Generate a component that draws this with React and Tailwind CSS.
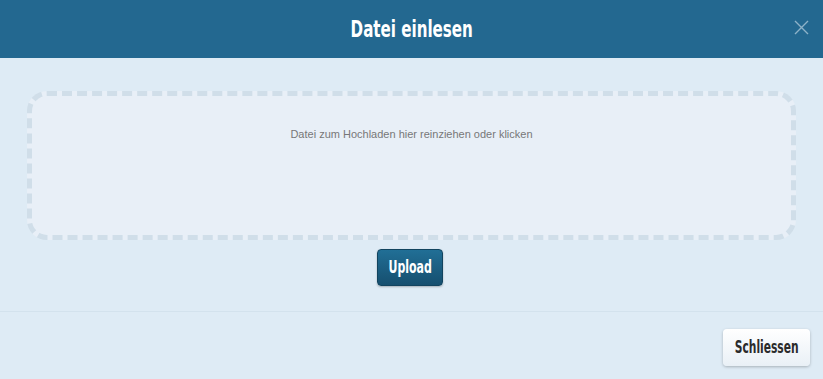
import React from 'react';

const condensed = { fontFamily: '"DejaVu Sans Condensed", "Liberation Sans", sans-serif' };

const App = () => {
  return (
    <div className="w-[823px] h-[379px] bg-[#deebf5] flex flex-col overflow-hidden">
      {/* Header */}
      <div className="relative h-[58px] bg-[#236890] flex items-center justify-center shrink-0">
        <h1 className="text-white text-[23px] font-bold scale-x-[0.73]" style={condensed}>
          Datei einlesen
        </h1>
        <button className="absolute right-[14px] top-[20px] w-[15px] h-[15px] text-[#8db2c8]">
          <svg viewBox="0 0 15 15" className="w-full h-full" fill="none" stroke="currentColor" strokeWidth="1.4">
            <path d="M1 1 L14 14 M14 1 L1 14" />
          </svg>
        </button>
      </div>

      {/* Body */}
      <div className="px-[27px] pt-[33px] flex flex-col items-center">
        <div className="w-full h-[149px] rounded-[20px] border-[5px] border-dashed border-[#d0dee9] bg-[#e8eff7] flex justify-center pt-[30px] cursor-pointer">
          <span className="text-[11px] text-[#777]" style={{ fontFamily: '"Liberation Sans", Arial, sans-serif' }}>
            Datei zum Hochladen hier reinziehen oder klicken
          </span>
        </div>
        <button className="mt-[9px] ml-[-3px] w-[66px] h-[37px] rounded-[4px] border border-[#12445f] bg-gradient-to-b from-[#216f96] to-[#164f6f] shadow-[0_1px_2px_rgba(0,0,0,0.25)] flex items-center justify-center">
          <span className="inline-block text-white text-[17px] font-bold scale-x-[0.72]" style={condensed}>
            Upload
          </span>
        </button>
      </div>

      {/* Footer */}
      <div className="mt-[25px] border-t border-[#d3e2ed] flex justify-end pr-[13px] pt-[17px]">
        <button className="w-[87px] h-[37px] rounded-[4px] bg-gradient-to-b from-white to-[#e9f0f6] shadow-[0_1px_3px_rgba(0,0,0,0.25)] flex items-center justify-center">
          <span className="inline-block text-[#2b2b2b] text-[17px] font-bold scale-x-[0.7]" style={condensed}>
            Schliessen
          </span>
        </button>
      </div>
    </div>
  );
};

export default App;
